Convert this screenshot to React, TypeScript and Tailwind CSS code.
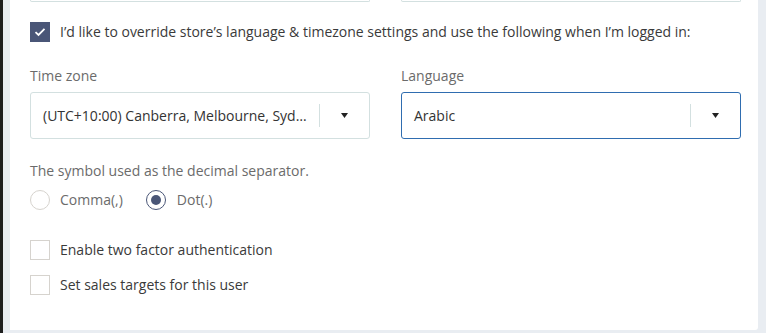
import React, { useState } from "react";

const Check = ({ checked }: { checked: boolean }) => (
  <span
    className={
      "flex h-[20px] w-[20px] shrink-0 items-center justify-center border " +
      (checked ? "border-[#4a5677] bg-[#4a5677]" : "border-[#d6d3ce] bg-white")
    }>
    {checked && (
      <svg width="12" height="10" viewBox="0 0 12 10">
        <path d="M1.5 5.2 L4.5 8 L10.5 1.8" stroke="#fff" strokeWidth="1.8" fill="none" />
      </svg>
    )}
  </span>
);

const Radio = ({ checked }: { checked: boolean }) => (
  <span
    className={
      "flex h-[20px] w-[20px] shrink-0 items-center justify-center rounded-full border bg-white " +
      (checked ? "border-[#4a5677]" : "border-[#d6d3ce]")
    }>
    {checked && <span className="h-[10px] w-[10px] rounded-full bg-[#4a5677]" />}
  </span>
);

const Select = ({ value, active }: { value: string; active?: boolean }) => (
  <div
    className={
      "flex h-[47px] items-center rounded-[3px] border bg-white " +
      (active ? "border-[#2f6db0]" : "border-[#d3e0e0]")
    }>
    <span className="flex-1 truncate pl-[12px] pr-[10px] text-[14px] text-[#333]">{value}</span>
    <span className="h-[23px] w-px bg-[#d3e0e0]" />
    <span className="flex w-[49px] justify-center">
      <svg width="7" height="5" viewBox="0 0 7 5">
        <path d="M0 0 H7 L3.5 5 Z" fill="#222" />
      </svg>
    </span>
  </div>
);

export default function App() {
  const [override] = useState(true);
  return (
    <div
      className="flex h-[333px] w-[766px] overflow-hidden bg-[#e9edf2]"
      style={{ fontFamily: "'Open Sans', 'Noto Sans', sans-serif" }}>
      <div className="w-[3px] shrink-0 bg-[#1f1f1f]" />
      <div className="ml-[7px] mr-[8px] mb-[3px] flex-1 rounded-br-[3px] bg-white pl-[20px] pr-[17px]">
        <div className="grid grid-cols-2 gap-[31px]">
          <div className="h-[2px] rounded-b-[3px] border-x border-b border-[#d3e0e0]" />
          <div className="h-[2px] rounded-b-[3px] border-x border-b border-[#d3e0e0]" />
        </div>

        <label className="mt-[19px] flex items-center gap-[10px] text-[14px] text-[#3a3a3a]">
          <Check checked={override} />
          <span>I’d like to override store’s language &amp; timezone settings and use the following when I’m logged in:</span>
        </label>

        <div className="mt-[24px] grid grid-cols-2 gap-[31px]">
          <div>
            <div className="mb-[6px] text-[14px] leading-[20px] text-[#6b6b6b]">Time zone</div>
            <Select value="(UTC+10:00) Canberra, Melbourne, Sydney" />
          </div>
          <div>
            <div className="mb-[6px] text-[14px] leading-[20px] text-[#6b6b6b]">Language</div>
            <Select value="Arabic" active />
          </div>
        </div>

        <div className="mt-[22px] text-[14px] leading-[20px] text-[#6b6b6b]">
          The symbol used as the decimal separator.
        </div>
        <div className="mt-[8px] flex items-center text-[14px] text-[#6b6b6b]">
          <Radio checked={false} />
          <span className="ml-[10px]">Comma(,)</span>
          <span className="ml-[23px]">
            <Radio checked />
          </span>
          <span className="ml-[11px]">Dot(.)</span>
        </div>

        <label className="mt-[30px] flex items-center gap-[10px] text-[14px] leading-[20px] text-[#3a3a3a]">
          <Check checked={false} />
          <span>Enable two factor authentication</span>
        </label>
        <label className="mt-[15px] flex items-center gap-[10px] text-[14px] leading-[20px] text-[#3a3a3a]">
          <Check checked={false} />
          <span>Set sales targets for this user</span>
        </label>
      </div>
    </div>
  );
}
